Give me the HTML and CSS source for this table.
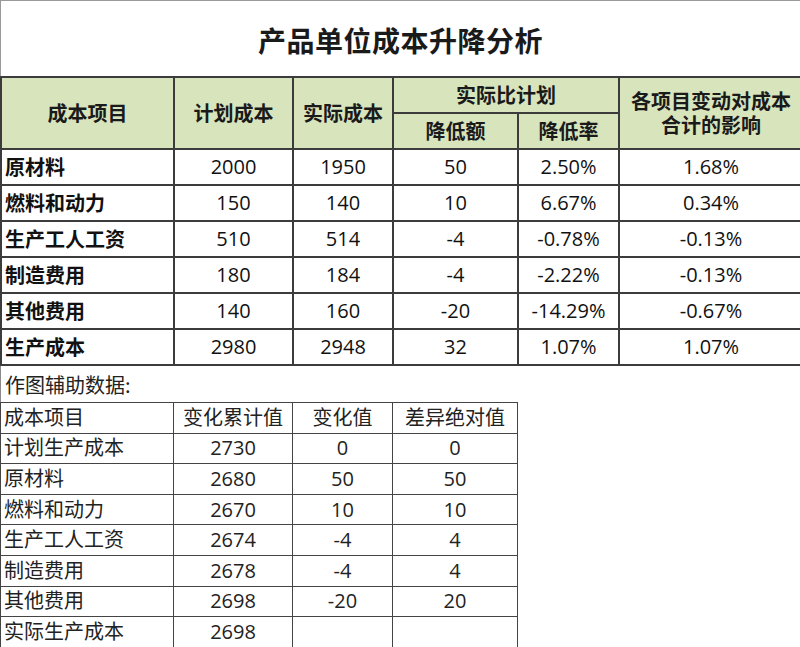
FILE: index.html
```html
<!DOCTYPE html>
<html lang="zh-CN">
<head>
<meta charset="utf-8">
<title>产品单位成本升降分析</title>
<link rel="stylesheet" href="styles.css">
</head>
<body>
<div class="sheet">
  <div class="title">产品单位成本升降分析</div>
  <table class="main">
    <colgroup>
      <col class="c1"><col class="c2"><col class="c3"><col class="c4"><col class="c5"><col class="c6">
    </colgroup>
    <thead>
      <tr class="h1">
        <th rowspan="2">成本项目</th>
        <th rowspan="2">计划成本</th>
        <th rowspan="2">实际成本</th>
        <th colspan="2">实际比计划</th>
        <th rowspan="2" class="two"><span class="ln">各项目变动对成本</span><span class="ln">合计的影响</span></th>
      </tr>
      <tr class="h2">
        <th>降低额</th>
        <th>降低率</th>
      </tr>
    </thead>
    <tbody>
      <tr><td class="name">原材料</td><td>2000</td><td>1950</td><td>50</td><td>2.50%</td><td>1.68%</td></tr>
      <tr><td class="name">燃料和动力</td><td>150</td><td>140</td><td>10</td><td>6.67%</td><td>0.34%</td></tr>
      <tr><td class="name">生产工人工资</td><td>510</td><td>514</td><td>-4</td><td>-0.78%</td><td>-0.13%</td></tr>
      <tr><td class="name">制造费用</td><td>180</td><td>184</td><td>-4</td><td>-2.22%</td><td>-0.13%</td></tr>
      <tr><td class="name">其他费用</td><td>140</td><td>160</td><td>-20</td><td>-14.29%</td><td>-0.67%</td></tr>
      <tr><td class="name">生产成本</td><td>2980</td><td>2948</td><td>32</td><td>1.07%</td><td>1.07%</td></tr>
    </tbody>
  </table>
  <div class="label">作图辅助数据:</div>
  <table class="aux">
    <colgroup>
      <col class="c1"><col class="c2"><col class="c3"><col class="c4">
    </colgroup>
    <tbody>
      <tr><td class="name">成本项目</td><td>变化累计值</td><td>变化值</td><td>差异绝对值</td></tr>
      <tr><td class="name">计划生产成本</td><td>2730</td><td>0</td><td>0</td></tr>
      <tr><td class="name">原材料</td><td>2680</td><td>50</td><td>50</td></tr>
      <tr><td class="name">燃料和动力</td><td>2670</td><td>10</td><td>10</td></tr>
      <tr><td class="name">生产工人工资</td><td>2674</td><td>-4</td><td>4</td></tr>
      <tr><td class="name">制造费用</td><td>2678</td><td>-4</td><td>4</td></tr>
      <tr><td class="name">其他费用</td><td>2698</td><td>-20</td><td>20</td></tr>
      <tr><td class="name">实际生产成本</td><td>2698</td><td></td><td></td></tr>
    </tbody>
  </table>
</div>
</body>
</html>
```

FILE: styles.css
```css
html, body {
  margin: 0;
  padding: 0;
  background: #ffffff;
}

body {
  font-family: "Open Sans", "Noto Sans CJK SC", sans-serif;
  color: #111;
  overflow: hidden;
}

.sheet {
  width: 800px;
  height: 647px;
  overflow: hidden;
}

.title {
  box-sizing: border-box;
  height: 76px;
  border-top: 1px solid #9a9a9a;
  border-left: 1px solid #9a9a9a;
  display: flex;
  align-items: center;
  justify-content: center;
  font-family: "Noto Sans CJK SC", sans-serif;
  font-size: 28px;
  font-weight: 700;
  color: #1a1a1a;
  letter-spacing: 0.5px;
  padding-top: 3px;
}

table {
  border-collapse: collapse;
  table-layout: fixed;
}

.main {
  width: 802px;
}

.c1 { width: 173px; }
.c2 { width: 119px; }
.c3 { width: 100px; }
.c4 { width: 125px; }
.c5 { width: 101px; }
.c6 { width: 184px; }

th, td {
  border: 2px solid #3c3c3c;
  padding: 0;
  text-align: center;
  font-size: 20px;
  line-height: 24px;
  white-space: nowrap;
  overflow: hidden;
}

th {
  background: #d8e4bc;
  font-family: "Noto Sans CJK SC", sans-serif;
  font-size: 20px;
  font-weight: 700;
  color: #1a1a1a;
}

.main .h1 { height: 36px; }
.main .h2 { height: 36px; }
.main tbody tr { height: 36px; }

.main td {
  font-weight: 400;
}

.main td.name {
  text-align: left;
  padding-left: 3px;
  font-family: "Noto Sans CJK SC", sans-serif;
  font-weight: 700;
}

.main th.two .ln {
  display: block;
  line-height: 24px;
}

.label {
  box-sizing: border-box;
  height: 36px;
  border-left: 1px solid #8a8a8a;
  display: flex;
  align-items: center;
  padding-left: 4px;
  font-family: "Noto Sans CJK SC", sans-serif;
  font-size: 20px;
  color: #222;
}

.aux {
  width: 517px;
}

.aux tr {
  height: 30.6px;
}

.aux td {
  border: 1.5px solid #444;
  line-height: 22px;
  color: #222;
}

.aux td.name {
  text-align: left;
  padding-left: 3px;
}
```
